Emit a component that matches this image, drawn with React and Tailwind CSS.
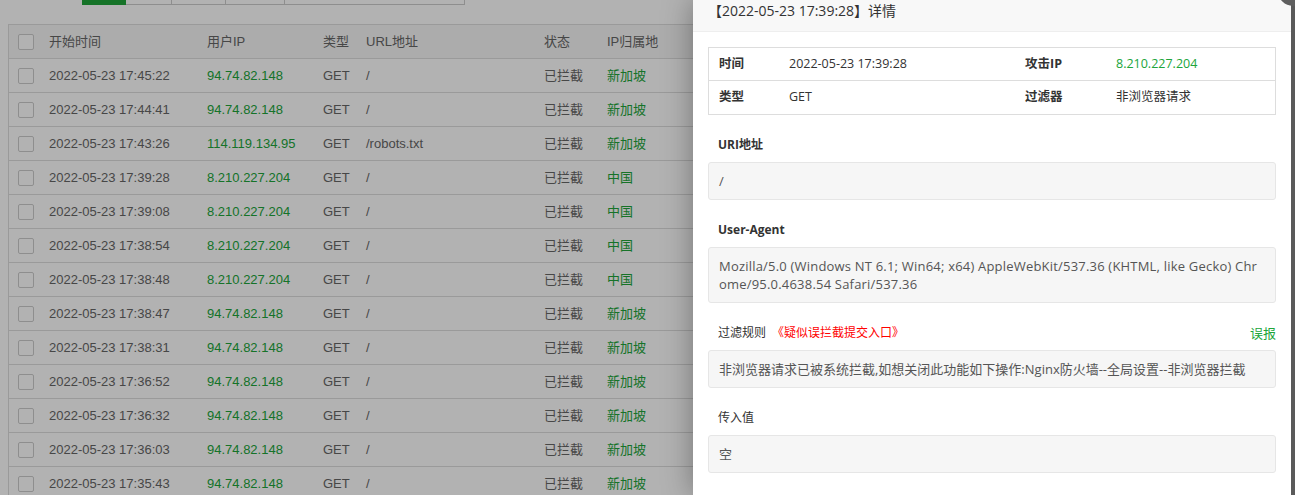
import React from "react";

const FONT = { fontFamily: '"Liberation Sans", "Noto Sans CJK SC", sans-serif' };
const PANEL_FONT = { fontFamily: '"Open Sans", "Noto Sans CJK SC", sans-serif' };

const ROWS = [
  ["2022-05-23 17:45:22", "94.74.82.148", "GET", "/", "已拦截", "新加坡"],
  ["2022-05-23 17:44:41", "94.74.82.148", "GET", "/", "已拦截", "新加坡"],
  ["2022-05-23 17:43:26", "114.119.134.95", "GET", "/robots.txt", "已拦截", "新加坡"],
  ["2022-05-23 17:39:28", "8.210.227.204", "GET", "/", "已拦截", "中国"],
  ["2022-05-23 17:39:08", "8.210.227.204", "GET", "/", "已拦截", "中国"],
  ["2022-05-23 17:38:54", "8.210.227.204", "GET", "/", "已拦截", "中国"],
  ["2022-05-23 17:38:48", "8.210.227.204", "GET", "/", "已拦截", "中国"],
  ["2022-05-23 17:38:47", "94.74.82.148", "GET", "/", "已拦截", "新加坡"],
  ["2022-05-23 17:38:31", "94.74.82.148", "GET", "/", "已拦截", "新加坡"],
  ["2022-05-23 17:36:52", "94.74.82.148", "GET", "/", "已拦截", "新加坡"],
  ["2022-05-23 17:36:32", "94.74.82.148", "GET", "/", "已拦截", "新加坡"],
  ["2022-05-23 17:36:03", "94.74.82.148", "GET", "/", "已拦截", "新加坡"],
  ["2022-05-23 17:35:43", "94.74.82.148", "GET", "/", "已拦截", "新加坡"],
];

const COLS = "grid grid-cols-[33px_158px_116px_43px_178px_63px_1fr]";

function Checkbox() {
  return <span className="block w-[16px] h-[16px] border border-[#cccccc] rounded-[2px] bg-white ml-[9px]" />;
}

function LogTable() {
  return (
    <div className="ml-[8px] mt-[19px] border-l border-t border-[#dddddd] text-[13px] text-[#666666]">
      <div className={`${COLS} h-[34px] items-center bg-[#f6f6f6] border-b border-[#dddddd]`}>
        <Checkbox />
        <span className="pl-[7px]">开始时间</span>
        <span className="pl-[7px]">用户IP</span>
        <span className="pl-[7px]">类型</span>
        <span className="pl-[7px]">URL地址</span>
        <span className="pl-[7px]">状态</span>
        <span className="pl-[7px]">IP归属地</span>
      </div>
      {ROWS.map((r, i) => (
        <div key={i} className={`${COLS} h-[34px] items-center border-b border-[#dddddd]`}>
          <Checkbox />
          <span className="pl-[7px]">{r[0]}</span>
          <span className="pl-[7px] text-[#20a53a]">{r[1]}</span>
          <span className="pl-[7px]">{r[2]}</span>
          <span className="pl-[7px]">{r[3]}</span>
          <span className="pl-[7px]">{r[4]}</span>
          <span className="pl-[7px] text-[#20a53a]">{r[5]}</span>
        </div>
      ))}
    </div>
  );
}

function Field({ label, bold, extra, right, wide, children }) {
  return (
    <div className="mt-[20px]">
      <div className="flex items-center justify-between h-[20px] leading-[20px] text-[12px] text-[#333333] mb-[7px] pl-[10px]">
        <div>
          <span className={bold ? "font-bold" : ""}>{label}</span>
          {extra}
        </div>
        {right}
      </div>
      <div className={`bg-[#f6f6f6] border border-[#e6e6e6] rounded-[3px] px-[10px] py-[9px] text-[13px] leading-[18px] text-[#555555] break-all ${wide ? "tracking-[0.2px]" : ""}`}>
        {children}
      </div>
    </div>
  );
}

function DetailPanel() {
  return (
    <div className="absolute top-0 left-[693px] w-[598px] h-[495px] bg-white shadow-[0_0_28px_rgba(0,0,0,0.35)]" style={PANEL_FONT}>
      <div className="h-[32px] bg-[#f8f8f8] border-b border-[#eeeeee] pl-[15px] text-[14px] leading-[21px] text-[#333333]">
        【2022-05-23 17:39:28】详情
      </div>
      <div className="px-[15px] pt-[15px]">
        <div className="border border-[#dddddd] text-[12.5px] text-[#333333]">
          <div className="grid grid-cols-[70px_236px_91px_1fr] h-[33px] items-center border-b border-[#dddddd]">
            <span className="pl-[10px] font-bold">时间</span>
            <span className="pl-[10px]">2022-05-23 17:39:28</span>
            <span className="pl-[10px] font-bold">攻击IP</span>
            <span className="pl-[10px] text-[#20a53a]">8.210.227.204</span>
          </div>
          <div className="grid grid-cols-[70px_236px_91px_1fr] h-[33px] items-center">
            <span className="pl-[10px] font-bold">类型</span>
            <span className="pl-[10px]">GET</span>
            <span className="pl-[10px] font-bold">过滤器</span>
            <span className="pl-[10px]">非浏览器请求</span>
          </div>
        </div>

        <Field label="URI地址" bold>/</Field>
        <Field label="User-Agent" bold wide>
          Mozilla/5.0 (Windows NT 6.1; Win64; x64) AppleWebKit/537.36 (KHTML, like Gecko) Chrome/95.0.4638.54 Safari/537.36
        </Field>
        <Field
          label="过滤规则"
          extra={<span className="text-[#ff0000] ml-[6px]">《疑似误拦截提交入口》</span>}
          right={<span className="text-[#20a53a] text-[13px] cursor-pointer">误报</span>}
        >
          非浏览器请求已被系统拦截,如想关闭此功能如下操作:Nginx防火墙--全局设置--非浏览器拦截
        </Field>
        <Field label="传入值">空</Field>
      </div>
    </div>
  );
}

export default function App() {
  return (
    <div className="relative w-[1295px] h-[495px] overflow-hidden bg-white" style={FONT}>
      {/* tab buttons, only their bottom edge shows */}
      <div className="flex ml-[82px] h-[5px]">
        <div className="w-[44px] bg-[#20a53a]" />
        <div className="w-[46px] border-r border-b border-[#cccccc]" />
        <div className="w-[54px] border-r border-b border-[#cccccc]" />
        <div className="w-[59px] border-r border-b border-[#cccccc]" />
        <div className="w-[180px] border-r border-b border-[#cccccc]" />
      </div>

      <LogTable />

      {/* modal shade */}
      <div className="absolute inset-0 bg-black/30" />

      <DetailPanel />
      <div className="absolute top-0 right-0 w-[4px] h-[495px] bg-[#5a5a5a]" />
      <div className="absolute left-[1278px] top-[-24px] w-[30px] h-[30px] rounded-full bg-[#5f5f5f]" />
    </div>
  );
}
